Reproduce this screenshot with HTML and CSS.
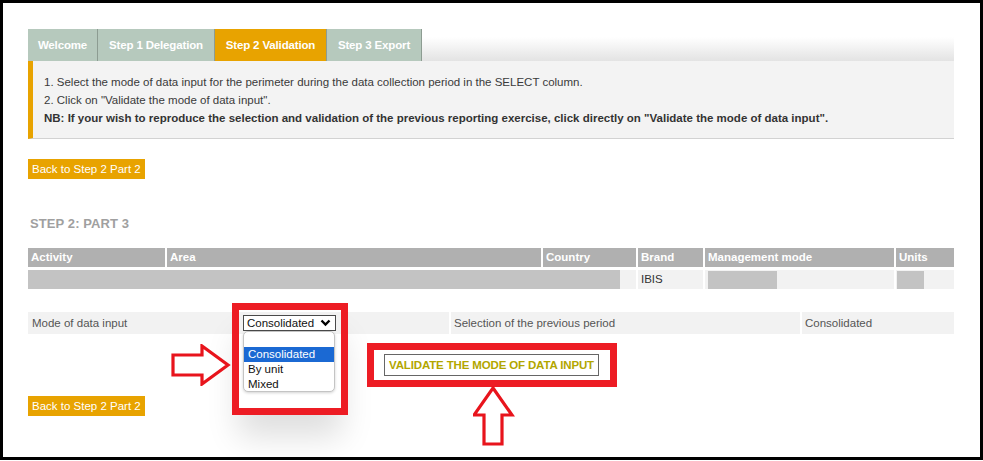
FILE: index.html
```html
<!DOCTYPE html>
<html lang="en">
<head>
<meta charset="utf-8">
<title>Step 2 Validation</title>
<link rel="stylesheet" href="styles.css">
</head>
<body>
<div class="frame">
  <div class="page">
    <nav class="tabs">
      <div class="tab t-welcome">Welcome</div>
      <div class="tab t-step1">Step 1 Delegation</div>
      <div class="tab t-step2 active">Step 2 Validation</div>
      <div class="tab t-step3">Step 3 Export</div>
      <div class="tab-fill"></div>
    </nav>
    <div class="info">
      <p>1. Select the mode of data input for the perimeter during the data collection period in the SELECT column.</p>
      <p>2. Click on "Validate the mode of data input".</p>
      <p class="nb">NB: If your wish to reproduce the selection and validation of the previous reporting exercise, click directly on "Validate the mode of data input".</p>
    </div>
    <div class="btn-row"><a class="btn-back">Back to Step 2 Part 2</a></div>
    <h2 class="section-title">STEP 2: PART 3</h2>
    <div class="grid-table">
      <div class="th">Activity</div>
      <div class="th">Area</div>
      <div class="th">Country</div>
      <div class="th">Brand</div>
      <div class="th">Management mode</div>
      <div class="th">Units</div>
      <div class="td span3"><span class="mask mask-wide"></span></div>
      <div class="td">IBIS</div>
      <div class="td"><span class="mask mask-mgmt"></span></div>
      <div class="td"><span class="mask mask-units"></span></div>
    </div>
    <div class="mode-row">
      <div class="mode-cell first">
        <span class="mode-label">Mode of data input</span>
        <div class="select-wrap">
          <div class="select-box">
            <span>Consolidated</span>
            <svg class="chev" width="11" height="8" viewBox="0 0 11 8"><polyline points="1.5,1.5 5.5,5.5 9.5,1.5" fill="none" stroke="#000" stroke-width="2.4"/></svg>
          </div>
          <div class="dropdown">
            <div class="opt empty"></div>
            <div class="opt selected">Consolidated</div>
            <div class="opt">By unit</div>
            <div class="opt">Mixed</div>
          </div>
          <div class="annot-frame select-frame"></div>
          <svg class="arrow-right" width="60" height="42" viewBox="0 0 60 42"><polygon points="2,11 31,11 31,2 57,21 31,40 31,31 2,31" fill="#fff" stroke="#e8141c" stroke-width="3.2" stroke-linejoin="miter"/></svg>
        </div>
      </div>
      <div class="mode-cell">Selection of the previous period</div>
      <div class="mode-cell">Consolidated</div>
    </div>
    <div class="validate-row">
      <div class="validate-wrap">
        <button class="btn-validate">VALIDATE THE MODE OF DATA INPUT</button>
        <div class="annot-frame validate-frame"></div>
        <svg class="arrow-up" width="42" height="62" viewBox="0 0 42 62"><polygon points="20,2 39,29 29,29 29,58 11,58 11,29 1,29" fill="#fff" stroke="#e8141c" stroke-width="3.2" stroke-linejoin="miter"/></svg>
      </div>
    </div>
    <div class="btn-row bottom"><a class="btn-back">Back to Step 2 Part 2</a></div>
  </div>
</div>
</body>
</html>
```
FILE: styles.css
```css
* { box-sizing: border-box; }
html, body { margin: 0; padding: 0; background: #fff; }
body { font-family: "Liberation Sans", Arial, sans-serif; font-size: 11.5px; color: #333; }

.frame {
  width: 983px;
  height: 460px;
  border: 3px solid #000;
  overflow: hidden;
}
.page { padding: 26px 0 0 25px; width: 951px; }

/* tabs */
.tabs { display: flex; height: 32px; width: 926px; }
.tab {
  background: #b6c9bd;
  color: #fff;
  font-weight: bold;
  font-size: 11.5px;
  line-height: 32px;
  text-align: center;
  border-right: 1px solid #8d9c92;
  white-space: nowrap;
  letter-spacing: -0.15px;
}
.t-welcome { width: 70px; }
.t-step1 { width: 117px; }
.t-step2 { width: 112px; }
.t-step3 { width: 95px; }
.tab.active { background: #e8a300; }
.tab-fill { flex: 1; background: linear-gradient(#ffffff 25%, #e3e3e3 100%); }

/* info box */
.info {
  width: 926px;
  background: #f3f3f3;
  border-left: 5px solid #e8a300;
  border-bottom: 1px solid #d2d2d2;
  padding: 12px 10px 11px 11px;
  color: #3a3a3a;
}
.info p { margin: 0; line-height: 18px; }
.info .nb { font-weight: bold; color: #333; }

/* buttons */
.btn-row { margin-top: 20px; }
.btn-back {
  display: inline-block;
  height: 20px;
  line-height: 20px;
  padding: 0 4px;
  white-space: nowrap;
  background: #e8a300;
  color: #fff;
  font-size: 11.5px;
  cursor: pointer;
}
.btn-row.bottom { margin-top: 20px; }

.section-title {
  margin: 37px 0 16px 2px;
  font-size: 13px;
  line-height: 16px;
  font-weight: bold;
  color: #a0a0a0;
  letter-spacing: 0.1px;
}

/* table */
.grid-table {
  display: grid;
  width: 926px;
  grid-template-columns: 137px 374px 93px 65px 189px 58px;
  column-gap: 2px;
  row-gap: 3px;
}
.th {
  background: #b0b0b0;
  color: #fff;
  font-weight: bold;
  height: 19px;
  line-height: 19px;
  padding-left: 3px;
}
.td {
  background: #f2f2f2;
  height: 19px;
  line-height: 19px;
  padding-left: 3px;
  display: flex;
  align-items: center;
}
.td.span3 { grid-column: 1 / 4; padding-left: 0; }
.mask { display: block; background: #c3c3c3; height: 18px; }
.mask-wide { width: 592px; height: 19px; }
.mask-mgmt { width: 69px; }
.mask-units { width: 27px; margin-left: -2px; }

/* mode row */
.mode-row {
  display: grid;
  width: 926px;
  grid-template-columns: 421px 349px 152px;
  column-gap: 2px;
  margin-top: 23px;
}
.mode-cell {
  background: #f2f2f2;
  height: 22px;
  line-height: 22px;
  color: #555;
  padding-left: 3px;
}
.mode-cell.first { display: flex; align-items: center; padding-left: 0; }
.mode-label { width: 215px; padding-left: 4px; }

.select-wrap { position: relative; }
.select-box {
  width: 93px;
  height: 16px;
  border: 1px solid #4a4a4a;
  background: #fff;
  display: flex;
  align-items: center;
  justify-content: space-between;
  padding: 0 4px 0 3px;
  color: #111;
  line-height: 14px;
}
.chev { display: block; }

.dropdown {
  position: absolute;
  left: 0;
  top: 16px;
  width: 92px;
  height: 61px;
  background: #fff;
  border: 1px solid #c4c4c4;
  border-radius: 5px;
  box-shadow: 0 1px 3px rgba(0,0,0,0.18);
  padding-top: 1px;
  z-index: 2;
}
.opt { height: 15px; line-height: 15px; padding-left: 4px; color: #111; }
.opt.empty { height: 14px; }
.opt.selected { background: #1b69d3; color: #fff; }

.annot-frame {
  position: absolute;
  border: 7px solid #ed1c24;
  z-index: 1;
}
.select-frame {
  left: -11px;
  top: -12px;
  width: 116px;
  height: 112px;
  box-shadow: 0 28px 30px -6px rgba(0,0,0,0.13);
}
.arrow-right { position: absolute; left: -72px; top: 29px; z-index: 3; }

/* validate */
.validate-row { margin-top: 20px; padding-left: 356px; }
.validate-wrap { position: relative; display: inline-block; }
.btn-validate {
  display: block;
  height: 22px;
  width: 215px;
  padding: 0;
  background: #fff;
  border: 1px solid #666;
  color: #b2a600;
  font-family: "Liberation Sans", Arial, sans-serif;
  font-weight: bold;
  font-size: 11.5px;
  letter-spacing: -0.15px;
  position: relative;
  z-index: 2;
}
.validate-frame { left: -17px; top: -11px; width: 250px; height: 44px; }
.arrow-up { position: absolute; left: 89px; top: 32px; z-index: 3; }
```
